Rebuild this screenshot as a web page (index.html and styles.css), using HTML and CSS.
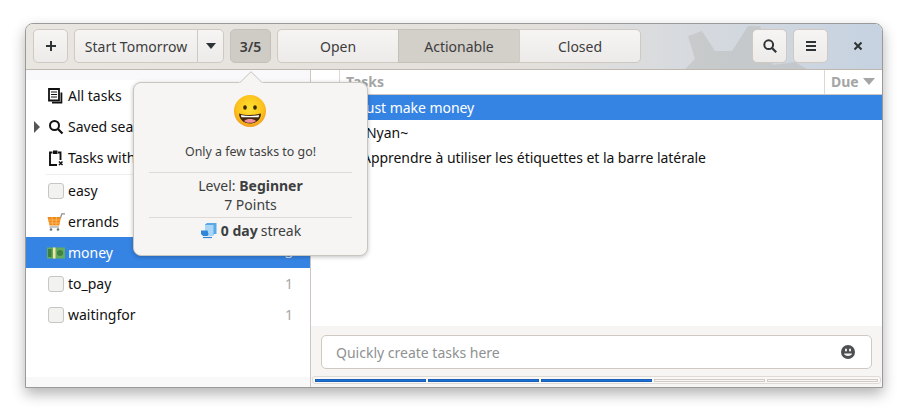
FILE: index.html
```html
<!DOCTYPE html>
<html lang="en">
<head>
<meta charset="utf-8">
<title>Getting Things GNOME</title>
<link rel="stylesheet" href="styles.css">
</head>
<body>
<div class="window">
  <header class="headerbar">
    <svg class="gear" width="130" height="46" viewBox="0 0 130 46"><path d="M0 46L10 36 3 13 17 8 30 28H47L63 3H75L88 42 110 39 122 46Z" fill="#b4b4b1" fill-opacity=".42"/></svg>
    <button class="btn icon-btn"><svg width="16" height="16" viewBox="0 0 16 16"><path d="M7 3h2v4h4v2H9v4H7V9H3V7h4z" fill="#2e3436"/></svg></button>
    <div class="split">
      <button class="btn split-main">Start Tomorrow</button>
      <button class="btn split-arrow"><svg width="12" height="8" viewBox="0 0 12 8"><path d="M1 1h10L6 7z" fill="#2e3436"/></svg></button>
    </div>
    <button class="btn score">3/5</button>
    <div class="stack">
      <button class="btn stack-btn">Open</button>
      <button class="btn stack-btn active">Actionable</button>
      <button class="btn stack-btn">Closed</button>
    </div>
    <div class="spacer"></div>
    <button class="btn icon-btn"><svg width="16" height="16" viewBox="0 0 16 16"><circle cx="6.700" cy="6.700" r="4.400" fill="none" stroke="#2e3436" stroke-width="2"/><path d="M10 10l4.200 4.200" stroke="#2e3436" stroke-width="2.200"/></svg></button>
    <button class="btn icon-btn"><svg width="16" height="16" viewBox="0 0 16 16"><path d="M3 3h10v2H3zM3 7h10v2H3zM3 11h10v2H3z" fill="#2e3436"/></svg></button>
    <button class="close"><svg width="16" height="16" viewBox="0 0 16 16"><path d="M4.500 4.500l7 7M11.500 4.500l-7 7" stroke="#2e3436" stroke-width="2"/></svg></button>
  </header>
  <main class="main">
    <aside class="sidebar">
      <div class="side-strip"></div>
      <ul class="side-list">
        <li class="side-row"><span class="glyph mono"><svg width="16" height="16" viewBox="0 0 16 16"><path d="M1 1h10v11.500H1z" fill="none" stroke="#111" stroke-width="1.800"/><path d="M3 4h6M3 6.500h6M3 9h6" stroke="#111" stroke-width="1.200"/><path d="M12.500 4.500h1.800V15.500H4V13.800h8.500z" fill="#111"/></svg></span><span class="name">All tasks</span></li>
        <li class="side-row"><svg class="expander" width="8" height="12" viewBox="0 0 8 12"><path d="M1 0l6 6-6 6z" fill="#555"/></svg><span class="glyph mono"><svg width="16" height="16" viewBox="0 0 16 16"><circle cx="6.500" cy="6.500" r="4.500" fill="none" stroke="#111" stroke-width="2"/><path d="M10 10l4.500 4.500" stroke="#111" stroke-width="2.200"/></svg></span><span class="name">Saved searches</span></li>
        <li class="side-row"><span class="glyph mono"><svg width="16" height="16" viewBox="0 0 16 16"><path d="M9 15H2V2.500h2.500M10 2.500h2.500V10" fill="none" stroke="#111" stroke-width="1.900"/><path d="M5 0.500h4.500v3.500H5z" fill="#111"/><path d="M11 11.500l3.500 3.500M14.500 11.500L11 15" stroke="#111" stroke-width="1.500"/></svg></span><span class="name">Tasks with no tags</span></li>
        <li class="side-sep"></li>
        <li class="side-row"><span class="glyph"><span class="swatch"></span></span><span class="name">easy</span><span class="count">1</span></li>
        <li class="side-row"><span class="glyph"><svg class="pict" width="18" height="18" viewBox="0 0 18 18"><path d="M.5 4h13.500l-1.700 8.500H2.500z" fill="#f08a1d"/><path d="M1.500 7h12M2 10h11M5 4l.7 8.500M9.500 4l-.5 8.500" stroke="#ffc36b" stroke-width=".7"/><path d="M13.500 5l1.300-4.200H18M2.500 14h9.500" stroke="#8c8f8c" stroke-width="1.200" fill="none"/><circle cx="4" cy="16.500" r="1.300" fill="#6f716f"/><circle cx="11" cy="16.500" r="1.300" fill="#6f716f"/></svg></span><span class="name">errands</span><span class="count">1</span></li>
        <li class="side-row selected"><span class="glyph"><svg class="pict" width="18" height="12" viewBox="0 0 18 12"><rect width="18" height="11" y=".5" fill="#63ab5f"/><rect x="6" width="2.500" height="11" y=".5" fill="#f3e6a4"/><circle cx="13" cy="6" r="3" fill="#3f8243"/><rect x="1" y="2" width="3.500" height="8" fill="#3b7f3f"/></svg></span><span class="name">money</span><span class="count">3</span></li>
        <li class="side-row"><span class="glyph"><span class="swatch"></span></span><span class="name">to_pay</span><span class="count">1</span></li>
        <li class="side-row"><span class="glyph"><span class="swatch"></span></span><span class="name">waitingfor</span><span class="count">1</span></li>
      </ul>
      <div class="side-foot"></div>
    </aside>
    <section class="content">
      <div class="columns">
        <div class="col col-a"></div>
        <div class="col col-tasks">Tasks</div>
        <div class="col col-due">Due <svg width="12" height="7" viewBox="0 0 12 7"><path d="M0 0h12L6 7z" fill="#a4a6a6"/></svg></div>
      </div>
      <ul class="tasks">
        <li class="task selected">Just make money</li>
        <li class="task nyan">Nyan~</li>
        <li class="task">Apprendre à utiliser les étiquettes et la barre latérale</li>
      </ul>
      <div class="bottom">
        <div class="entry"><span class="placeholder">Quickly create tasks here</span><svg width="16" height="16" viewBox="0 0 16 16"><circle cx="8" cy="8" r="7" fill="#4d5052"/><rect x="5" y="4.500" width="2" height="3" rx="1" fill="#f6f5f4"/><rect x="9" y="4.500" width="2" height="3" rx="1" fill="#f6f5f4"/><path d="M4 9.500h8c0 1.500-2 2.500-4 2.500s-4-1-4-2.500z" fill="#f6f5f4"/></svg></div>
        <div class="progress">
          <span class="seg done"></span><span class="seg done"></span><span class="seg done"></span><span class="seg"></span><span class="seg"></span>
        </div>
      </div>
    </section>
  </main>
  <div class="popover">
    <svg class="arrow" width="24" height="12" viewBox="0 0 24 12"><path d="M0 12L12 0l12 12z" fill="#f6f5f4"/><path d="M1 11.500L12 .7l11 10.800" fill="none" stroke="#c9c5bf"/></svg>
    <svg class="emoji" width="36" height="36" viewBox="0 0 36 36"><defs><radialGradient id="face" cx=".5" cy=".42" r=".58"><stop offset="0" stop-color="#fee133"/><stop offset=".72" stop-color="#fcc21b"/><stop offset="1" stop-color="#f19a20"/></radialGradient></defs><circle cx="18" cy="18" r="16" fill="url(#face)"/><ellipse cx="13" cy="14.500" rx="1.800" ry="2.300" fill="#40290f"/><ellipse cx="23" cy="14.500" rx="1.800" ry="2.300" fill="#40290f"/><path d="M7 20.500c3.500 1 7 1.500 11 1.500s7.500-.5 11-1.500c0 6-5 10-11 10S7 26.500 7 20.500z" fill="#40290f"/><path d="M9 22c2.800.7 5.800 1 9 1s6.200-.3 9-1l-.4 2.300H9.400z" fill="#fff"/><path d="M12 28c1.700-1.500 3.800-2 6-2s4.300.5 6 2c-1.700 1.300-3.800 1.800-6 1.800s-4.300-.5-6-1.800z" fill="#f48fa0"/></svg>
    <p class="pop-msg">Only a few tasks to go!</p>
    <div class="pop-sep"></div>
    <p class="pop-line">Level: <b>Beginner</b></p>
    <p class="pop-line">7 Points</p>
    <div class="pop-sep"></div>
    <p class="pop-streak"><svg width="18" height="16" viewBox="0 0 18 16"><path d="M5 1.500L7 0h9.500v11H14.500L13 12.500H5z" fill="#5aa9e6"/><path d="M5 2h8.500v10.500H5z" fill="#a9d6f7"/><path d="M1 7.500h6.500l1 3.500-1 2H3l-2-2z" fill="#2f86d6"/><path d="M3 14.500h9" stroke="#2f86d6" stroke-width="1.200"/></svg><b>0 day</b> streak</p>
  </div>
</div>
</body>
</html>
```
FILE: styles.css
```css
* { box-sizing: border-box; }
html, body { margin: 0; height: 100%; }
body {
  background: #fff;
  padding: 23px 25px 28px;
  font-family: "Noto Sans", sans-serif;
  font-size: 14px;
  color: #111;
}
button { font: inherit; margin: 0; }
ul { list-style: none; margin: 0; padding: 0; }
p { margin: 0; }

.window {
  position: relative;
  width: 858px;
  height: 365px;
  display: flex;
  flex-direction: column;
  background: #fff;
  border: 1px solid #9b9a98;
  border-radius: 8px 8px 0 0;
  box-shadow: 0 6px 14px rgba(0,0,0,.3);
}

.headerbar {
  position: relative;
  flex: none;
  height: 46px;
  display: flex;
  align-items: center;
  gap: 6px;
  padding: 0 0 1px 7px;
  background: linear-gradient(90deg, #e9e6e2 0%, #e3e0dc 60%, #c6d2e1 100%);
  border-bottom: 1px solid #bfb8b1;
  border-radius: 7px 7px 0 0;
  overflow: hidden;
}
.gear { position: absolute; left: 659px; bottom: 0; }
.btn {
  position: relative;
  height: 34px;
  padding: 0;
  border: 1px solid #cfc9c2;
  border-radius: 5px;
  background: linear-gradient(#f6f5f4, #edebe9);
  color: #3d3d3d;
  display: flex;
  align-items: center;
  justify-content: center;
}
.icon-btn { width: 35px; }
.split { display: flex; }
.split-main { width: 123px; border-radius: 5px 0 0 5px; border-right: 0; }
.split-arrow { width: 27px; border-radius: 0 5px 5px 0; }
.score {
  width: 41px;
  font-weight: 600;
  background: #cfcbc5;
  border-color: #c4c0ba;
}
.stack { display: flex; width: 364px; }
.stack-btn { flex: 1; border-radius: 0; border-right: 0; }
.stack-btn:first-child { border-radius: 5px 0 0 5px; }
.stack-btn:last-child { border-radius: 0 5px 5px 0; border-right: 1px solid #cfc9c2; }
.stack-btn.active { background: #d3cfc9; border-color: #c4c0ba; }
.spacer { flex: 1; }
.close {
  position: relative;
  width: 48px;
  height: 34px;
  padding: 0;
  border: 0;
  background: none;
  display: flex;
  align-items: center;
  justify-content: center;
}

.main { flex: 1; display: flex; min-height: 0; }
.sidebar {
  width: 285px;
  display: flex;
  flex-direction: column;
  border-right: 1px solid #cdc7c2;
}
.side-strip { height: 10px; background: #f9f9fb; flex: none; }
.side-list { flex: 1; }
.side-row {
  position: relative;
  height: 31px;
  display: flex;
  align-items: center;
  padding-left: 20px;
  padding-right: 17px;
  overflow: hidden;
  white-space: nowrap;
}
.side-row.selected { background: #3584e4; color: #fff; }
.expander { position: absolute; left: 7px; top: 10px; }
.glyph { width: 22px; flex: none; display: flex; align-items: center; }
.glyph.mono svg { margin-left: 2px; }
.pict { margin-left: 1px; flex: none; }
.swatch {
  display: block;
  width: 16px;
  height: 16px;
  margin-left: 2px;
  background: #f2f2f1;
  border: 1px solid #c6c6c3;
  border-radius: 3px;
}
.name { flex: 1; }
.count { color: #a6a6a6; }
.selected .count { color: #e0e0e0; }
.side-sep { height: 1px; margin: 1px 0 0 20px; background: #efefef; }
.side-foot { flex: none; height: 10px; background: #f8f8f8; }

.content { flex: 1; min-width: 0; display: flex; flex-direction: column; }
.columns {
  flex: none;
  height: 25px;
  display: flex;
  border-bottom: 1px solid #cdc7c2;
  color: #a4a6a6;
  font-weight: 700;
  font-size: 14px;
}
.col { display: flex; align-items: center; padding-bottom: 2px; border-right: 1px solid #dcd9d5; }
.col-a { width: 29px; }
.col-tasks { flex: 1; padding-left: 6px; }
.col-due { width: 57px; padding-left: 6px; gap: 4px; border-right: 0; }
.tasks { flex: 1; }
.task { height: 25px; display: flex; align-items: center; padding-left: 51px; white-space: nowrap; letter-spacing: -.04px; }
.task.selected { background: #3584e4; color: #fff; }
.task.nyan { padding-left: 55px; }

.bottom { flex: none; background: #f6f5f4; height: 61px; padding: 9px 10px 0; display: flex; flex-direction: column; position: relative; }
.entry {
  height: 34px;
  background: #fff;
  border: 1px solid #cfc9c2;
  border-radius: 5px;
  display: flex;
  align-items: center;
  justify-content: space-between;
  padding: 0 15px 0 14px;
  flex: none;
}
.placeholder { color: #8e9192; }
.progress {
  position: absolute;
  left: 1px;
  right: 1px;
  top: 50px;
  height: 8px;
  display: flex;
  align-items: center;
  gap: 2px;
  padding: 1px 2px 0;
  background: #f9f8f7;
  border: 1px solid #dedbd7;
  border-radius: 3px;
}
.seg { flex: 1; height: 3px; background: #f6f5f4; border: 1px solid #d0ccc7; }
.seg.done { background: #1c71d8; border-color: #1a5fb4; }

.popover {
  position: absolute;
  left: 107px;
  top: 58px;
  width: 235px;
  height: 174px;
  display: flex;
  flex-direction: column;
  align-items: center;
  padding: 10px 15px 0;
  background: #f6f5f4;
  border: 1px solid #c9c5bf;
  border-radius: 8px;
  box-shadow: 0 1px 4px rgba(0,0,0,.25);
  color: #3d3f41;
  font-size: 14px;
}
.arrow { position: absolute; left: 105px; top: -12px; }
.emoji { flex: none; margin-right: 2px; }
.pop-msg { margin-top: 12px; height: 22px; line-height: 22px; font-size: 12.400px; }
.pop-sep { align-self: stretch; flex: none; height: 1px; background: #dedbd7; margin-top: 9px; }
.pop-sep + .pop-line { margin-top: 3px; }
.pop-line { line-height: 19px; }
.pop-line + .pop-sep { margin-top: 3px; }
.pop-streak { margin-top: 3px; display: flex; align-items: center; gap: 3px; line-height: 19px; }
```
